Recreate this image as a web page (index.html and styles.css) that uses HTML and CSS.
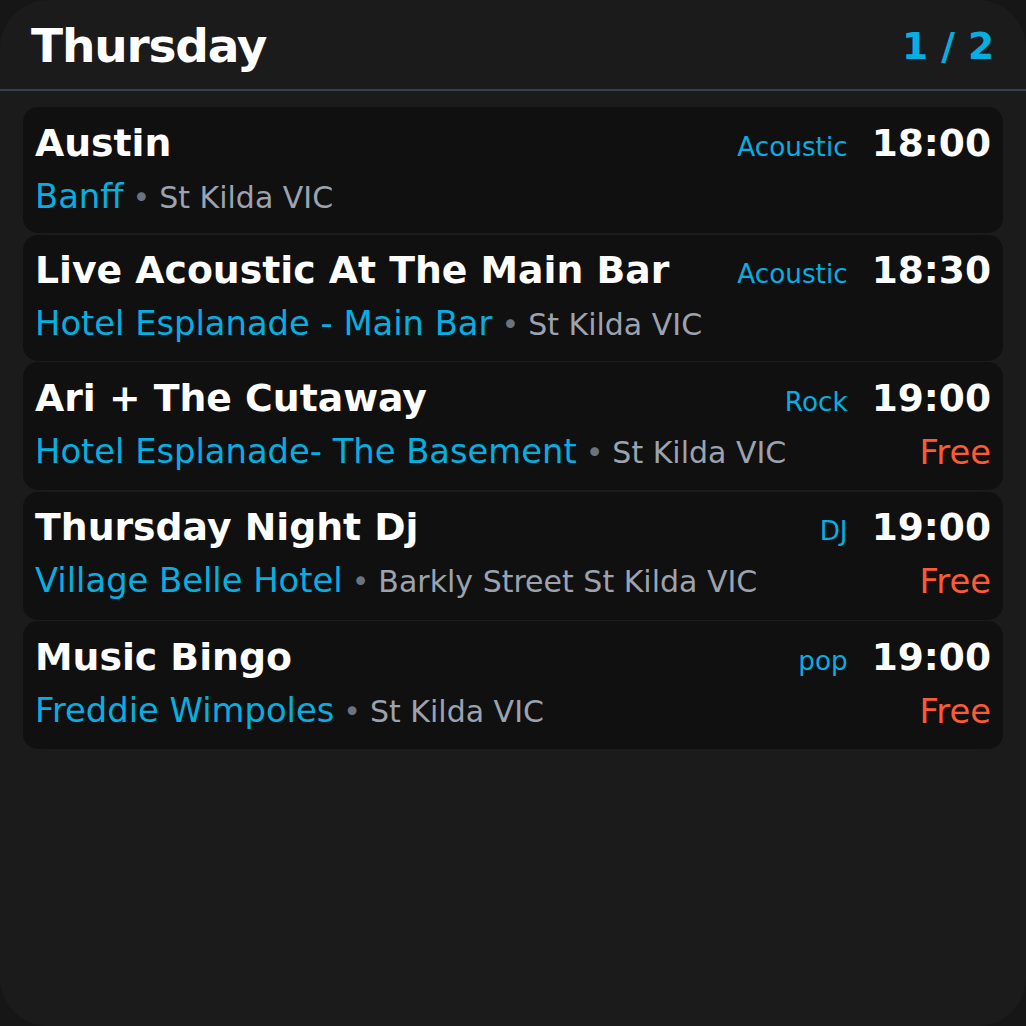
FILE: index.html
```html
<!DOCTYPE html>
<html lang="en">
<head>
<meta charset="utf-8">
<title>Thursday</title>
<link rel="stylesheet" href="styles.css">
</head>
<body>
<div class="app">
  <header class="header">
    <h1 class="day">Thursday</h1>
    <div class="page">1 / 2</div>
  </header>
  <main class="list">
    <article class="card">
      <div class="row top">
        <div class="title">Austin</div>
        <div class="genre">Acoustic</div>
        <div class="time">18:00</div>
      </div>
      <div class="row bottom">
        <div class="place"><span class="venue">Banff</span><span class="loc"><span class="dot">•</span>St Kilda VIC</span></div>
      </div>
    </article>
    <article class="card">
      <div class="row top">
        <div class="title">Live Acoustic At The Main Bar</div>
        <div class="genre">Acoustic</div>
        <div class="time">18:30</div>
      </div>
      <div class="row bottom">
        <div class="place"><span class="venue">Hotel Esplanade - Main Bar</span><span class="loc"><span class="dot">•</span>St Kilda VIC</span></div>
      </div>
    </article>
    <article class="card">
      <div class="row top">
        <div class="title">Ari + The Cutaway</div>
        <div class="genre">Rock</div>
        <div class="time">19:00</div>
      </div>
      <div class="row bottom">
        <div class="place"><span class="venue">Hotel Esplanade- The Basement</span><span class="loc"><span class="dot">•</span>St Kilda VIC</span></div>
        <div class="price">Free</div>
      </div>
    </article>
    <article class="card">
      <div class="row top">
        <div class="title">Thursday Night Dj</div>
        <div class="genre">DJ</div>
        <div class="time">19:00</div>
      </div>
      <div class="row bottom">
        <div class="place"><span class="venue">Village Belle Hotel</span><span class="loc"><span class="dot">•</span>Barkly Street St Kilda VIC</span></div>
        <div class="price">Free</div>
      </div>
    </article>
    <article class="card">
      <div class="row top">
        <div class="title">Music Bingo</div>
        <div class="genre">pop</div>
        <div class="time">19:00</div>
      </div>
      <div class="row bottom">
        <div class="place"><span class="venue">Freddie Wimpoles</span><span class="loc"><span class="dot">•</span>St Kilda VIC</span></div>
        <div class="price">Free</div>
      </div>
    </article>
  </main>
</div>
</body>
</html>
```
FILE: styles.css
```css
* { box-sizing: border-box; }
html, body {
  margin: 0;
  padding: 0;
  background: #161616;
}
body {
  font-family: "DejaVu Sans", "Liberation Sans", sans-serif;
  color: #ffffff;
}
.app {
  width: 1026px;
  height: 1026px;
  background: #1b1b1b;
  border-radius: 48px;
  overflow: hidden;
  display: flex;
  flex-direction: column;
}
.header {
  display: flex;
  align-items: center;
  justify-content: space-between;
  padding: 18px 32px 16px 31px;
  border-bottom: 2px solid #3a404c;
}
.day {
  margin: 0;
  font-size: 47px;
  font-weight: bold;
  letter-spacing: -0.025em;
  line-height: normal;
  color: #ffffff;
}
.page {
  font-size: 37.5px;
  font-weight: bold;
  color: #07aee0;
}
.list {
  display: flex;
  flex-direction: column;
  gap: 1.5px;
  padding: 16px 23px;
}
.card {
  background: #101010;
  border-radius: 15px;
  padding: 13.5px 12px 17.25px 12px;
  display: flex;
  flex-direction: column;
  gap: 12.25px;
  box-shadow: 0 6px 20px rgba(255, 255, 255, 0.012);
}
.row {
  display: flex;
}
.top {
  align-items: baseline;
}
.bottom {
  align-items: flex-start;
}
.title {
  flex: 1;
  font-size: 37.75px;
  font-weight: bold;
  color: #ffffff;
  white-space: nowrap;
}
.genre {
  font-size: 26.25px;
  color: #07aee0;
}
.time {
  margin-left: 24px;
  font-size: 37.5px;
  font-weight: bold;
  color: #ffffff;
}
.place {
  flex: 1;
  white-space: nowrap;
  font-size: 33.75px;
}
.venue {
  color: #07aee0;
}
.loc {
  font-size: 30px;
  color: #9ca3af;
}
.dot {
  color: #6b7280;
  margin: 0 9px 0 9px;
}
.price {
  font-size: 33.75px;
  line-height: 41px;
  color: #ff5a36;
}
```
